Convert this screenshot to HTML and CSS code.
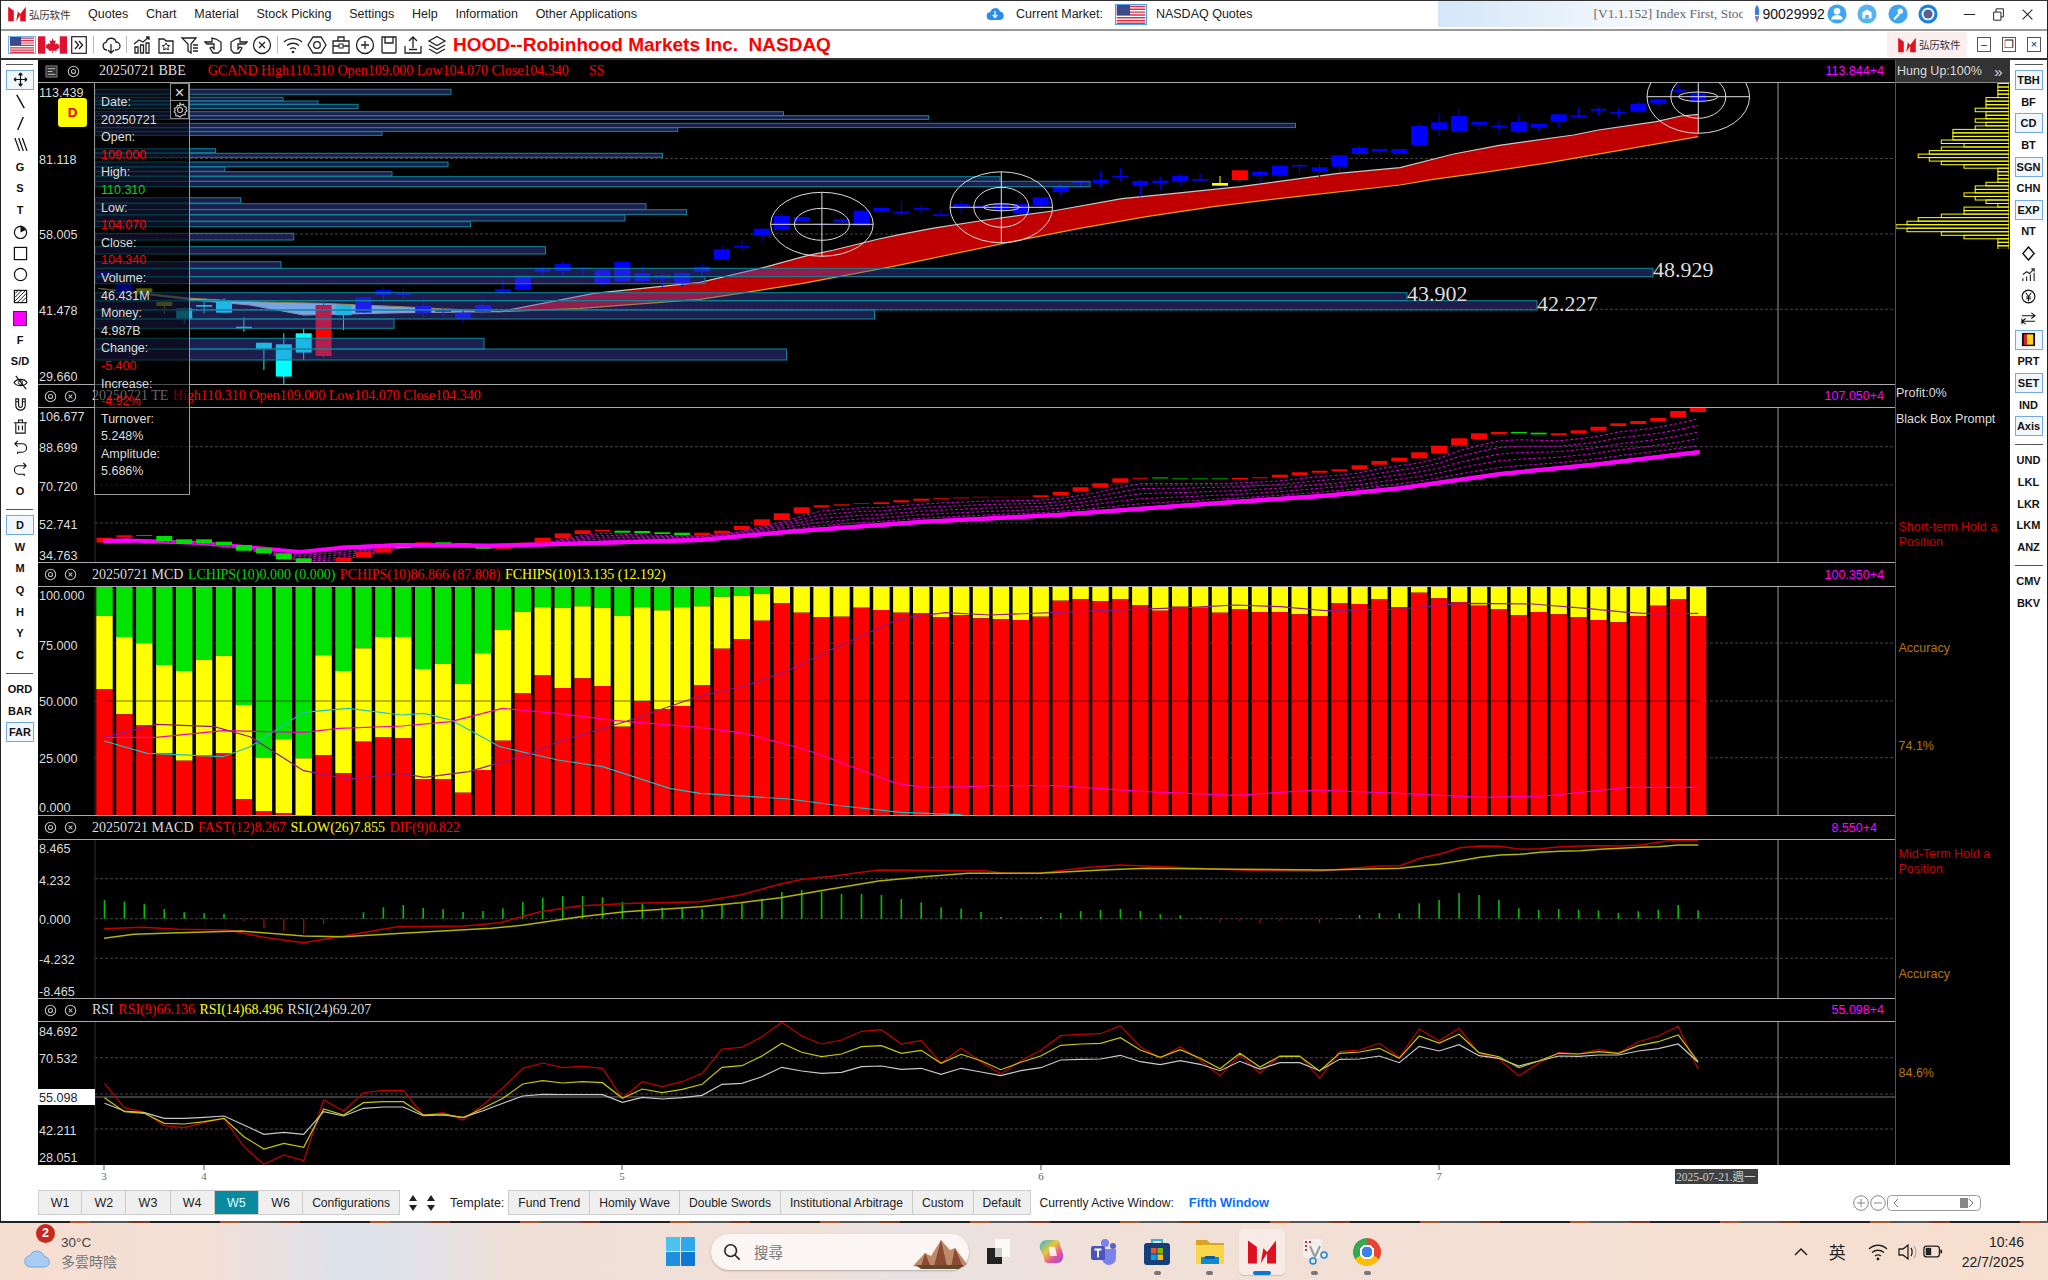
FILE: index.html
```html
<!DOCTYPE html>
<html lang="en">
<head>
<meta charset="utf-8">
<title>HOOD chart</title>
<link rel="stylesheet" href="styles.css">
</head>
<body>
<svg class="defs" width="0" height="0">
  <symbol id="us" viewBox="0 0 30 20"><rect width="30" height="20" fill="#fff"/><path d="M0 1.5h30M0 4.5h30M0 7.5h30M0 10.5h30M0 13.5h30M0 16.5h30M0 19.2h30" stroke="#d8324a" stroke-width="1.5"/><rect width="14" height="10.5" fill="#3c4a8c"/></symbol>
  <symbol id="ca" viewBox="0 0 30 18"><rect width="30" height="18" fill="#fff"/><rect width="7.5" height="18" fill="#e01030"/><rect x="22.5" width="7.5" height="18" fill="#e01030"/><path d="M15 3l1.6 3 1.8-.8-.7 4 2.2-.9.7 1.5 2-.3-.9 2.4.9.7-3.6 2.4.4 1.3-3.7-.5V18h-1v-2.2l-3.7.5.4-1.3-3.6-2.4.9-.7-.9-2.4 2 .3.7-1.5 2.2.9-.7-4 1.8.8z" fill="#e01030" transform="translate(0 -1)"/></symbol>
  <symbol id="mark" viewBox="0 0 22 20"><path d="M0 1l7 5v13H0z" fill="#e01020"/><path d="M22 1v18h-7v-8l-5 8 2-12 3 3z" fill="#e01020"/></symbol>
  <symbol id="gear" viewBox="0 0 14 14"><circle cx="7" cy="7" r="5.6" fill="none" stroke="#bbb" stroke-width="1.2"/><circle cx="7" cy="7" r="2.2" fill="none" stroke="#bbb" stroke-width="1.2"/></symbol>
  <symbol id="xc" viewBox="0 0 14 14"><circle cx="7" cy="7" r="5.6" fill="none" stroke="#bbb" stroke-width="1.2"/><path d="M5 5l4 4M9 5l-4 4" stroke="#bbb" stroke-width="1.1"/></symbol>
</svg>

<div class="window">
  <header class="menubar">
    <div class="logo"><svg class="logo-mark"><use href="#mark"/></svg><span class="logo-text">弘历软件</span></div>
    <nav class="menu"><span>Quotes</span><span>Chart</span><span>Material</span><span>Stock Picking</span><span>Settings</span><span>Help</span><span>Information</span><span>Other Applications</span></nav>
    <div class="market">
      <svg class="cloud-blue" viewBox="0 0 18 14"><path d="M5 13a4 4 0 0 1-.6-8A5 5 0 0 1 14 4.500a4.300 4.300 0 0 1 0 8.500z" fill="#2a8cf0"/><path d="M9 4v6M6.800 8l2.200 2.500L11.200 8" stroke="#fff" stroke-width="1.300" fill="none"/></svg>
      <span class="market-label">Current Market:</span>
      <svg class="market-flag"><use href="#us"/></svg>
      <span>NASDAQ Quotes</span>
    </div>
    <div class="version"><span>[V1.1.152] Index First, Stoc</span></div>
    <div class="user">
      <svg class="rocket" viewBox="0 0 8 20"><path d="M4 1c2 2 2.500 5 2 10H2C1.500 6 2 3 4 1z" fill="#3a7fd0"/><path d="M2 12h4v3H2z" fill="#88b"/><path d="M3 15h2l-1 4z" fill="#e02020"/></svg>
      <span>90029992</span>
      <svg class="round" viewBox="0 0 22 22"><circle cx="11" cy="11" r="10.500" fill="#3fa4f2"/><circle cx="11" cy="8" r="3.600" fill="#fff"/><path d="M4.500 17c1-4 3.500-5 6.500-5s5.500 1 6.500 5z" fill="#fff"/></svg>
      <svg class="round gap" viewBox="0 0 22 22"><circle cx="11" cy="11" r="10.500" fill="#56b4f4"/><path d="M6 16V9l5-3 5 3v7z" fill="#fff"/><path d="M9 16v-4h4v4z" fill="#56b4f4"/></svg>
      <svg class="round gap" viewBox="0 0 22 22"><circle cx="11" cy="11" r="10.500" fill="#3fa4f2"/><circle cx="13.500" cy="8" r="3" fill="#fff"/><path d="M11.500 10L6 16l1.500 1.500L13 12z" fill="#fff"/></svg>
      <svg class="round gap" viewBox="0 0 22 22"><circle cx="11" cy="11" r="10.500" fill="#1f7fe0"/><circle cx="11" cy="11" r="7" fill="#fff"/><circle cx="11" cy="11" r="5" fill="#2a6fc0"/><path d="M9 8v6M13 8v6" stroke="#e03030" stroke-width="1.500"/></svg>
    </div>
    <div class="winctl">
      <svg viewBox="0 0 16 16"><path d="M1 8h14" stroke="#222" stroke-width="1.300"/></svg>
      <svg viewBox="0 0 16 16"><path d="M2 5h9v10H2zM5 5V1h9v10h-3" fill="none" stroke="#222" stroke-width="1.200"/></svg>
      <svg viewBox="0 0 16 16"><path d="M2 2l12 12M14 2L2 14" stroke="#222" stroke-width="1.300"/></svg>
    </div>
  </header>

  <div class="toolbar">
    <svg class="tb-us"><use href="#us"/></svg>
    <svg class="tb-ca"><use href="#ca"/></svg>
    <svg class="tb-more" viewBox="0 0 16 18"><rect x=".7" y=".7" width="14.600" height="16.600" fill="#fff" stroke="#222" stroke-width="1.200"/><path d="M4 5l3.500 4L4 13M8 5l3.500 4L8 13" fill="none" stroke="#222" stroke-width="1.400"/></svg>
    <i class="tb-sep"></i>
    <svg class="ti" viewBox="0 0 20 20"><path d="M6 15a4 4 0 0 1-.7-7.900A5 5 0 0 1 15 7a4 4 0 0 1 0 8h-1" fill="none" stroke="#222" stroke-width="1.300"/><path d="M10 9v9M7 15l3 3 3-3" fill="none" stroke="#222" stroke-width="1.300"/></svg>
    <i class="tb-sep"></i>
    <svg class="ti" viewBox="0 0 20 20"><path d="M3 18v-6h3v6zM8.500 18v-8h3v8zM14 18V8h3v10zM2 9l5-4 4 2 6-5M14 2h3v3" fill="none" stroke="#222" stroke-width="1.300"/></svg>
    <svg class="ti" viewBox="0 0 20 20"><path d="M3 4h5l2 2h7v12H3zM3 4v14" fill="none" stroke="#222" stroke-width="1.300"/><path d="M10 8l1.200 2.300 2.500.4-1.800 1.700.5 2.500-2.400-1.200-2.400 1.200.5-2.500-1.800-1.700 2.500-.4z" fill="none" stroke="#222"/></svg>
    <svg class="ti" viewBox="0 0 20 20"><path d="M2 3h14l-5 6v9l-3-2V9zM13 10h5M13 13h5M13 16h5" fill="none" stroke="#222" stroke-width="1.300"/></svg>
    <svg class="ti" viewBox="0 0 20 20"><path d="M1 7h7V3l4 1 5 3v8l-3 3H9l-3-5 2-1 2 2V9H3z" fill="none" stroke="#222" stroke-width="1.300"/></svg>
    <svg class="ti" viewBox="0 0 20 20"><path d="M19 7h-7V3l-4 1-5 3v8l3 3h5l3-5-2-1-2 2V9h7z" fill="none" stroke="#222" stroke-width="1.300"/></svg>
    <svg class="ti" viewBox="0 0 20 20"><circle cx="10" cy="10" r="8.500" fill="none" stroke="#222" stroke-width="1.300"/><path d="M7 7l6 6M13 7l-6 6" stroke="#222" stroke-width="1.300"/></svg>
    <i class="tb-sep"></i>
    <svg class="ti" viewBox="0 0 20 20"><path d="M1 7c5-4.500 13-4.500 18 0M4 10.500c3.500-3 8.500-3 12 0M7 14c2-1.500 4-1.500 6 0" fill="none" stroke="#222" stroke-width="1.300"/><circle cx="10" cy="17" r="1.300" fill="#222"/></svg>
    <svg class="ti" viewBox="0 0 20 20"><path d="M6 2h8l5 8-5 8H6l-5-8z" fill="none" stroke="#222" stroke-width="1.300"/><circle cx="10" cy="10" r="3.300" fill="none" stroke="#222" stroke-width="1.300"/></svg>
    <svg class="ti" viewBox="0 0 20 20"><path d="M2 6h16v12H2zM7 6V2h6v4M2 11h16" fill="none" stroke="#222" stroke-width="1.300"/><rect x="8" y="9" width="4" height="4" fill="#fff" stroke="#222"/></svg>
    <svg class="ti" viewBox="0 0 20 20"><circle cx="10" cy="10" r="8.500" fill="none" stroke="#222" stroke-width="1.300"/><path d="M10 6v8M6 10h8" stroke="#222" stroke-width="1.300"/></svg>
    <svg class="ti" viewBox="0 0 20 20"><path d="M3 2h14v15a1 1 0 0 1-1 1H4a1 1 0 0 1-1-1zM6 2v6h8V2" fill="none" stroke="#222" stroke-width="1.300"/></svg>
    <svg class="ti" viewBox="0 0 20 20"><path d="M10 13V2M6 6l4-4 4 4M2 11v7h16v-7M6 14.500h8" fill="none" stroke="#222" stroke-width="1.300"/></svg>
    <svg class="ti" viewBox="0 0 20 20"><path d="M10 1.500l8 4.500-8 4.500L2 6zM2 10l8 4.500 8-4.500M2 14l8 4.500 8-4.500" fill="none" stroke="#222" stroke-width="1.300"/></svg>
    <span class="title">HOOD--Robinhood Markets Inc.&nbsp; NASDAQ</span>
    <div class="brand"><svg class="logo-mark"><use href="#mark"/></svg><span class="logo-text">弘历软件</span></div>
    <span class="mini">&#8211;</span><span class="mini">&#10064;</span><span class="mini">&#215;</span>
  </div>

  <div class="workspace">
    <aside class="leftbar">
      <i class="sep first"></i>
      <div class="tool on"><svg viewBox="0 0 16 16"><path d="M8 1v14M1 8h14M8 1L6 3.500M8 1l2 2.500M8 15l-2-2.500M8 15l2-2.500M1 8l2.500-2M1 8l2.500 2M15 8l-2.500-2M15 8l-2.500 2" fill="none" stroke="#111" stroke-width="1.300"/></svg></div>
      <div class="tool"><svg viewBox="0 0 16 16"><path d="M4 1l8 14" stroke="#111" stroke-width="1.500"/></svg></div>
      <div class="tool"><svg viewBox="0 0 16 16"><path d="M11 1L5 15" stroke="#111" stroke-width="1.500"/></svg></div>
      <div class="tool"><svg viewBox="0 0 16 16"><path d="M2 1l5 14M6 1l5 14M10 1l5 14" stroke="#111" stroke-width="1.300"/></svg></div>
      <div class="tool">G</div><div class="tool">S</div><div class="tool">T</div>
      <div class="tool"><svg viewBox="0 0 16 16"><circle cx="8" cy="9" r="6.500" fill="none" stroke="#111" stroke-width="1.300"/><path d="M8 9V1l6 5z" fill="#111"/></svg></div>
      <div class="tool"><svg viewBox="0 0 16 16"><rect x="1.500" y="1.500" width="13" height="13" fill="none" stroke="#111" stroke-width="1.300"/></svg></div>
      <div class="tool"><svg viewBox="0 0 16 16"><circle cx="8" cy="8" r="6.500" fill="none" stroke="#111" stroke-width="1.300"/></svg></div>
      <div class="tool"><svg viewBox="0 0 16 16"><rect x="1.500" y="1.500" width="13" height="13" fill="none" stroke="#111" stroke-width="1.300"/><path d="M2 5l3-3M2 9l7-7M2 13L13 2M5 14l9-9M9 14l5-5" stroke="#111"/></svg></div>
      <div class="tool"><span class="swatch"></span></div>
      <div class="tool">F</div><div class="tool">S/D</div>
      <div class="tool"><svg viewBox="0 0 16 16"><path d="M1 8c3-4.500 11-4.500 14 0-3 4.500-11 4.500-14 0z" fill="none" stroke="#111" stroke-width="1.200"/><circle cx="8" cy="8" r="2.200" fill="none" stroke="#111"/><path d="M3 1l11 14" stroke="#111" stroke-width="1.200"/></svg></div>
      <div class="tool"><svg viewBox="0 0 16 16"><path d="M3 2v7a5 5 0 0 0 10 0V2h-3v7a2 2 0 0 1-4 0V2zM3 5h3M10 5h3" fill="none" stroke="#111" stroke-width="1.200"/></svg></div>
      <div class="tool"><svg viewBox="0 0 16 16"><path d="M3 4h10v11H3zM1 4h14M6 4V1h4v3M6 7v5M10 7v5" fill="none" stroke="#111" stroke-width="1.200"/></svg></div>
      <div class="tool"><svg viewBox="0 0 16 16"><path d="M5 1L2 4l3 3M2 4h8a4.500 4.500 0 0 1 0 9H5v2" fill="none" stroke="#111" stroke-width="1.200"/></svg></div>
      <div class="tool"><svg viewBox="0 0 16 16"><path d="M11 1l3 3-3 3M14 4H6a4.500 4.500 0 0 0 0 9h6v2" fill="none" stroke="#111" stroke-width="1.200"/></svg></div>
      <div class="tool">O</div>
      <i class="sep"></i>
      <div class="tool on">D</div><div class="tool">W</div><div class="tool">M</div><div class="tool">Q</div><div class="tool">H</div><div class="tool">Y</div><div class="tool">C</div>
      <i class="sep"></i>
      <div class="tool">ORD</div><div class="tool">BAR</div><div class="tool on">FAR</div>
    </aside>

    <div class="content">
      <div class="upper">
        <div class="charts">
          <div class="phead head-main">
            <svg class="hicon first" viewBox="0 0 14 14"><path d="M1 1h12v12H1z" fill="#333" stroke="#888"/><path d="M3 4h8M3 7h5M3 10h8" stroke="#ccc"/></svg>
            <svg class="hicon second"><use href="#gear"/></svg>
            <span class="h-date">20250721 BBE</span>
            <span class="c-red gap-l">GCAND High110.310 Open109.000 Low104.070 Close104.340</span>
            <span class="c-red gap-s">SS</span>
            <span class="pval">113.844+4</span>
          </div>
          <svg class="plot p1" id="p1"></svg>
          <div class="phead">
            <svg class="hicon"><use href="#gear"/></svg><svg class="hicon"><use href="#xc"/></svg>
            <span class="h-date">20250721 TE</span> <span class="c-red">High110.310 Open109.000 Low104.070 Close104.340</span>
            <span class="pval">107.050+4</span>
          </div>
          <svg class="plot p2" id="p2"></svg>
          <div class="phead h24">
            <svg class="hicon"><use href="#gear"/></svg><svg class="hicon"><use href="#xc"/></svg>
            <span class="h-date">20250721 MCD</span> <span class="c-green">LCHIPS(10)0.000 (0.000)</span> <span class="c-red">PCHIPS(10)86.866 (87.808)</span> <span class="c-yellow">FCHIPS(10)13.135 (12.192)</span>
            <span class="pval">100.350+4</span>
          </div>
          <svg class="plot p3" id="p3"></svg>
          <div class="phead h24">
            <svg class="hicon"><use href="#gear"/></svg><svg class="hicon"><use href="#xc"/></svg>
            <span class="h-date">20250721 MACD</span> <span class="c-red">FAST(12)8.267</span> <span class="c-yellow">SLOW(26)7.855</span> <span class="c-red">DIF(9)0.822</span>
            <span class="pval small">8.550+4</span>
          </div>
          <svg class="plot p4" id="p4"></svg>
          <div class="phead">
            <svg class="hicon"><use href="#gear"/></svg><svg class="hicon"><use href="#xc"/></svg>
            <span class="h-date">RSI</span> <span class="c-red">RSI(9)66.136</span> <span class="c-yellow">RSI(14)68.496</span> <span class="h-date">RSI(24)69.207</span>
            <span class="pval">55.098+4</span>
          </div>
          <svg class="plot p5" id="p5"></svg>

          <div class="period">D</div>
          <div class="tip">
            <div class="tip-close">&#215;</div>
            <div class="tip-gear"><svg viewBox="0 0 16 16"><circle cx="8" cy="8" r="2.500" fill="none" stroke="#ccc" stroke-width="1.100"/><path d="M8 1l1.300 2 2.300-.7.600 2.300 2.300.7-.7 2.300 1.200 1.400-1.900 1.400.2 2.400-2.400.1L8 15l-1.900-1.100-2.400-.1.200-2.400L2 10l1.200-1.400-.7-2.300 2.300-.7.600-2.300 2.300.7z" fill="none" stroke="#ccc" stroke-width="1.100"/></svg></div>
            <p>Date:</p><p>20250721</p>
            <p>Open:</p><p class="c-red">109.000</p>
            <p>High:</p><p class="c-green">110.310</p>
            <p>Low:</p><p class="c-red">104.070</p>
            <p>Close:</p><p class="c-red">104.340</p>
            <p>Volume:</p><p>46.431M</p>
            <p>Money:</p><p>4.987B</p>
            <p>Change:</p><p class="c-red">-5.400</p>
            <p>Increase:</p><p class="c-red">-4.92%</p>
            <p>Turnover:</p><p>5.248%</p>
            <p>Amplitude:</p><p>5.686%</p>
          </div>
        </div>

        <aside class="hung">
          <div class="hung-head"><span>Hung Up:100%</span><span class="chev">&#187;</span></div>
          <svg class="hist" id="hist"></svg>
          <p class="note m1">Profit:0%</p>
          <p class="note m2">Black Box Prompt</p>
          <p class="note red m3">Short-term Hold a Position</p>
          <p class="note amber m4">Accuracy</p>
          <p class="note amber m5">74.1%</p>
          <p class="note red m6">Mid-Term Hold a Position</p>
          <p class="note amber m7">Accuracy</p>
          <p class="note amber m8">84.6%</p>
        </aside>

        <aside class="rightbar">
          <i class="sep first"></i>
          <div class="tool on">TBH</div><div class="tool">BF</div><div class="tool on">CD</div><div class="tool">BT</div><div class="tool on">SGN</div><div class="tool">CHN</div><div class="tool on">EXP</div><div class="tool">NT</div>
          <div class="tool"><svg viewBox="0 0 16 16"><path d="M8 1l6 7-6 7-6-7z" fill="none" stroke="#111" stroke-width="1.500"/></svg></div>
          <div class="tool"><svg viewBox="0 0 16 16"><path d="M2 15v-3M6 15v-5M10 15V8M14 15V6M2 8l4-3 3 2 5-5M11 2h3v3" fill="none" stroke="#222" stroke-width="1.200"/></svg></div>
          <div class="tool"><svg viewBox="0 0 16 16"><circle cx="8" cy="8" r="6.800" fill="none" stroke="#111" stroke-width="1.200"/><path d="M5 4l3 4 3-4M8 8v5M5.500 8.500h5M5.500 10.500h5" fill="none" stroke="#111" stroke-width="1.100"/></svg></div>
          <div class="tool"><svg viewBox="0 0 16 16"><path d="M1 5h14M11 2l4 3-4 3M15 11H1M5 8l-4 3 4 3M1 8v6" fill="none" stroke="#111" stroke-width="1.100"/></svg></div>
          <div class="tool on"><svg viewBox="0 0 16 16"><rect x="1" y="1" width="14" height="14" fill="#111"/><rect x="6" y="2.500" width="7" height="11" fill="#ffd21e"/><path d="M3 2.500h4l-1.500 3 1.500 2.500-1.500 2.500 1.500 3H3z" fill="#e02020"/></svg></div>
          <div class="tool">PRT</div><div class="tool on">SET</div><div class="tool">IND</div><div class="tool on">Axis</div>
          <i class="sep"></i>
          <div class="tool">UND</div><div class="tool">LKL</div><div class="tool">LKR</div><div class="tool">LKM</div><div class="tool">ANZ</div>
          <i class="sep"></i>
          <div class="tool">CMV</div><div class="tool">BKV</div>
        </aside>
      </div>

      <svg class="timeaxis" id="timeaxis"></svg>

      <div class="tabs">
        <span class="tab w">W1</span><span class="tab w">W2</span><span class="tab w">W3</span><span class="tab w">W4</span><span class="tab w active">W5</span><span class="tab w">W6</span><span class="tab">Configurations</span>
        <svg class="sort s1" viewBox="0 0 10 18"><path d="M5 1l4 6H1zM5 17l4-6H1z" fill="#222"/></svg>
        <svg class="sort s2" viewBox="0 0 10 18"><path d="M5 1l4 6H1zM5 17l4-6H1z" fill="#222"/></svg>
        <span class="tpl">Template:</span>
        <span class="tab first-t">Fund Trend</span><span class="tab">Homily Wave</span><span class="tab">Double Swords</span><span class="tab">Institutional Arbitrage</span><span class="tab">Custom</span><span class="tab">Default</span>
        <span class="active-label">Currently Active Window:</span>
        <span class="active-name">Fifth Window</span>
        <div class="zoomer">
          <svg class="zb" viewBox="0 0 16 16"><circle cx="8" cy="8" r="7.300" fill="none" stroke="#888"/><path d="M8 4v8M4 8h8" stroke="#888"/></svg>
          <svg class="zb" viewBox="0 0 16 16"><circle cx="8" cy="8" r="7.300" fill="none" stroke="#888"/><path d="M4 8h8" stroke="#888"/></svg>
          <svg class="scroll" viewBox="0 0 94 16"><rect x=".5" y=".5" width="93" height="15" rx="4" fill="#fff" stroke="#999"/><path d="M11 4l-4 4 4 4M82 4l4 4-4 4" fill="none" stroke="#777"/><rect x="73" y="3" width="8" height="10" fill="#888"/></svg>
        </div>
      </div>
    </div>
  </div>
</div>
<div class="seam"></div>

<footer class="taskbar">
  <div class="weather">
    <svg class="w-cloud" viewBox="0 0 30 20"><path d="M8 19a6 6 0 0 1-1-12A8 8 0 0 1 22 8a5.500 5.500 0 0 1 0 11z" fill="#a9cdf2" stroke="#6aa6e0"/></svg>
    <span class="badge">2</span>
    <div class="w-text"><span>30°C</span><span class="w-sub">多雲時陰</span></div>
  </div>
  <svg class="start" viewBox="0 0 28 28"><rect width="13.500" height="13.500" fill="#4cc2f1"/><rect x="14.500" width="13.500" height="13.500" fill="#2fa8ec"/><rect y="14.500" width="13.500" height="13.500" fill="#1c8fe0"/><rect x="14.500" y="14.500" width="13.500" height="13.500" fill="#0f78d4"/></svg>
  <div class="search">
    <svg class="s-icon" viewBox="0 0 20 20"><circle cx="8.500" cy="8.500" r="6.500" fill="none" stroke="#222" stroke-width="1.800"/><path d="M13 13l5.500 5.500" stroke="#222" stroke-width="1.800"/></svg>
    <span>搜尋</span>
    <svg class="s-art" viewBox="0 0 58 36"><path d="M2 32l12-13 6 3L30 6l9 10 5-2 12 16-4 3H8z" fill="#c08a6a"/><path d="M30 6l-7 26h13zM14 19l-4 14h10zM44 14l-4 19h12z" fill="#8a4a34"/><path d="M5 31h48l-5 4H10z" fill="#5e4a2a"/></svg>
  </div>
  <div class="apps">
    <div class="app"><svg viewBox="0 0 28 28"><rect x="10" y="1" width="15" height="18" fill="#fff" opacity=".8"/><rect x="2" y="10" width="15" height="16" fill="#222"/><rect x="10" y="10" width="7" height="9" fill="#ccc"/></svg></div>
    <div class="app"><svg viewBox="0 0 28 28"><defs><linearGradient id="cop" x1="0" y1="0" x2="1" y2="1"><stop offset="0" stop-color="#2bb3e6"/><stop offset=".4" stop-color="#e8c83a"/><stop offset=".7" stop-color="#e94fa0"/><stop offset="1" stop-color="#7a5ae0"/></linearGradient></defs><path d="M9 2h9c3 0 4 3 4 5l3 9c1 4-1 9-6 9h-9c-3 0-4-2-4-5L2 11C1 6 4 2 9 2z" fill="url(#cop)"/><path d="M11 9h6l2 9h-7z" fill="#fff" opacity=".85"/></svg></div>
    <div class="app"><svg viewBox="0 0 28 28"><circle cx="15" cy="5" r="4" fill="#7b83eb"/><circle cx="23" cy="8" r="3" fill="#5b5fc7"/><path d="M11 11h15v9a7 7 0 0 1-14 0z" fill="#7b83eb"/><rect x="1" y="8" width="14" height="14" rx="2" fill="#4b53bc"/><path d="M4.500 11.500h7M8 11.500v8" stroke="#fff" stroke-width="1.800"/></svg></div>
    <div class="app"><svg viewBox="0 0 28 28"><path d="M9 6V2h10v4" fill="none" stroke="#2bb8d8" stroke-width="2"/><rect x="1" y="5" width="26" height="22" rx="3" fill="#153f7c"/><rect x="8" y="10" width="5.500" height="5.500" fill="#f25022"/><rect x="14.500" y="10" width="5.500" height="5.500" fill="#7fba00"/><rect x="8" y="16.500" width="5.500" height="5.500" fill="#00a4ef"/><rect x="14.500" y="16.500" width="5.500" height="5.500" fill="#ffb900"/></svg><i class="dot"></i></div>
    <div class="app"><svg viewBox="0 0 28 28"><path d="M0 2h11l3 3h14v4H0z" fill="#d9a520"/><path d="M0 7h28v19H0z" fill="#fbd54a"/><path d="M5 19h18v7H5z" fill="#0f8bd0"/><rect x="9" y="18" width="10" height="3" fill="#0a5ea8"/></svg><i class="dot"></i></div>
    <div class="app current"><svg viewBox="0 0 28 28"><use href="#mark"/></svg><i class="bar"></i></div>
    <div class="app"><svg viewBox="0 0 28 28"><rect x="2" y="1" width="19" height="19" rx="2" fill="#f0f0f0"/><path d="M4 3h2v2H4zM8 3h2v2H8zM4 7h2v2H4zM4 11h2v2H4z" fill="#d03030"/><path d="M9 8l5 11M19 8l-5 11" stroke="#999" stroke-width="2"/><circle cx="12" cy="23" r="3" fill="none" stroke="#1e88d0" stroke-width="1.500"/><circle cx="23" cy="17" r="3" fill="none" stroke="#1e88d0" stroke-width="1.500"/></svg><i class="dot"></i></div>
    <div class="app"><span class="chrome"></span><i class="dot"></i></div>
  </div>
  <div class="tray">
    <svg class="t-caret" viewBox="0 0 14 10"><path d="M1 8l6-6 6 6" fill="none" stroke="#222" stroke-width="1.500"/></svg>
    <span class="t-ime">英</span>
    <svg class="t-wifi" viewBox="0 0 20 18"><path d="M1 6c5-5 13-5 18 0M4 9.500c3.500-3 8.500-3 12 0M7 13c2-1.500 4-1.500 6 0" fill="none" stroke="#222" stroke-width="1.400"/><circle cx="10" cy="16" r="1.400" fill="#222"/></svg>
    <svg class="t-vol" viewBox="0 0 20 18"><path d="M2 6h4l5-4v14l-5-4H2zM14 5c1.500 2 1.500 6 0 8" fill="none" stroke="#222" stroke-width="1.300"/><path d="M17 3c2.500 3 2.500 9 0 12" fill="none" stroke="#aaa" stroke-width="1.200"/></svg>
    <svg class="t-bat" viewBox="0 0 22 14"><rect x="1" y="1" width="17" height="12" rx="3" fill="none" stroke="#222" stroke-width="1.400"/><rect x="3" y="3" width="6" height="8" fill="#222"/><rect x="19" y="5" width="2" height="4" fill="#222"/></svg>
    <div class="t-time"><span>10:46</span><span>22/7/2025</span></div>
  </div>
</footer>
<script src="charts.js"></script>
</body>
</html>
```
FILE: styles.css
```css
* { box-sizing: border-box; }
html, body { margin: 0; padding: 0; }
body { width: 2048px; height: 1280px; overflow: hidden; background: #fff; font-family: "Liberation Sans", Arial, sans-serif; font-size: 12.5px; color: #222; }
.defs { position: absolute; }
p { margin: 0; }
.window { height: 1221px; display: flex; flex-direction: column; border-left: 1px solid #222; border-right: 1px solid #222; border-top: 1px solid #333; background: #fff; }

/* menu bar */
.menubar { height: 30px; flex: none; display: flex; align-items: center; border-bottom: 2px solid #999; padding-bottom: 2px; }
.logo { display: flex; align-items: center; width: 60px; margin-left: 7px; flex: none; }
.logo-mark { width: 18px; height: 16px; flex: none; }
.logo-text { font-family: "Noto Sans CJK SC", sans-serif; font-size: 10.5px; color: #333; margin-left: 3px; white-space: nowrap; letter-spacing: -.2px; }
.menu { display: flex; gap: 17.7px; margin-left: 20px; white-space: nowrap; }
.market { display: flex; align-items: center; margin-left: 349px; flex: none; white-space: nowrap; }
.cloud-blue { width: 18px; height: 14px; }
.market-label { margin-left: 12px; }
.market-flag { width: 32px; height: 21px; margin: 0 9px 0 12px; border: 1.5px solid #4aa0ea; }
.version { width: 305px; height: 26px; margin-left: 185px; flex: none; overflow: hidden; display: flex; align-items: center; white-space: nowrap; padding-left: 156px; background: linear-gradient(90deg, #d4e6f8, #f2f7fc 60%, #fff); font-family: "Liberation Serif", serif; font-size: 13.4px; color: #666; }
.user { display: flex; align-items: center; margin-left: 10px; font-size: 14px; color: #111; white-space: nowrap; flex: none; }
.rocket { width: 8px; height: 20px; margin-right: 2px; }
.round { width: 20px; height: 20px; margin-left: 2px; }
.round.gap { margin-left: 10.5px; }
.winctl { display: flex; gap: 16px; margin-left: auto; padding-right: 13px; flex: none; }
.winctl svg { width: 13px; height: 13px; flex: none; }

/* toolbar */
.toolbar { height: 29px; flex: none; display: flex; align-items: center; border-bottom: 2px solid #333; padding-left: 7px; position: relative; }
.tb-us { width: 28px; height: 18px; border: 1.5px solid #6fb0ee; flex: none; }
.tb-ca { width: 29px; height: 18px; margin-left: 2px; flex: none; }
.tb-more { width: 16px; height: 18px; margin-left: 4px; flex: none; }
.tb-sep { width: 1px; height: 17px; background: #bbb; margin: 0 3px; flex: none; }
.tb-more + .tb-sep { margin-left: 6px; margin-right: 5px; }
.ti { width: 20px; height: 20px; margin: 0 2px; flex: none; }
.title { margin-left: 4px; font-size: 19px; font-weight: 700; color: #f00; white-space: nowrap; flex: none; }
.brand { margin-left: auto; width: 80px; height: 25px; background: #fbeeee; display: flex; align-items: center; padding-left: 11px; flex: none; }
.mini { width: 14px; height: 15px; margin-left: 11px; border: 1px solid #555; display: flex; align-items: center; justify-content: center; font-size: 11px; line-height: 1; flex: none; }
.brand + .mini { margin-left: 10px; }
.mini:last-child { margin-right: 6px; }

/* workspace */
.workspace { flex: 1; display: flex; min-height: 0; }
.leftbar { width: 37px; flex: none; }
.rightbar { width: 38px; flex: none; }
.leftbar, .rightbar { display: flex; flex-direction: column; }
.sep { display: block; height: 12.4px; flex: none; padding-top: 7px; }
.sep::after { content: ""; display: block; height: 1px; background: #555; margin: 0 5px; }
.sep.first { height: 9.2px; padding-top: 4px; }
.tool { height: 21.65px; flex: none; margin: 0 4px 0 5px; display: flex; align-items: center; justify-content: center; font-size: 11px; font-weight: 700; color: #111; white-space: nowrap; }
.rightbar .tool { margin: 0 5px; }
.tool.on { border: 1.5px solid #74a9e6; background: #f2f7fd; height: 20px; margin-top: .8px; margin-bottom: .85px; }
.tool svg { width: 15px; height: 15px; }
.swatch { width: 14px; height: 15px; background: #ff00ff; border: 1px solid #333; display: block; }

.content { flex: 1; min-width: 0; display: flex; flex-direction: column; }
.upper { display: flex; height: 1105px; flex: none; }
.charts { width: 1857px; flex: none; display: flex; flex-direction: column; position: relative; background: #000; }
.phead { height: 23px; flex: none; display: flex; align-items: center; border-bottom: 1px solid #aaa; padding-left: 3px; font-family: "Liberation Serif", serif; font-size: 14px; white-space: pre; }
.phead.h24 { height: 24px; }
.phead > span + span { margin-left: 4.5px; }
.hicon { width: 13px; height: 13px; margin-left: 3px; margin-right: 4px; flex: none; }
.head-main .first { margin-left: 4px; margin-right: 3px; }
.head-main .second { margin-left: 6px; }
.h-date { color: #ddd; }
.hicon + .h-date { margin-left: 11px; }
.head-main .hicon + .h-date { margin-left: 15px; }
.c-red { color: #f00; }
.c-green { color: #00d800; }
.c-yellow { color: #ff0; }
.phead > .gap-l { margin-left: 22px; }
.phead > .gap-s { margin-left: 20px; }
.phead > .pval { margin-left: auto; margin-right: 11px; color: #f0f; font-family: "Liberation Sans", sans-serif; font-size: 12.5px; }
.phead > .pval.small { margin-right: 18px; }
.plot { display: block; width: 1857px; flex: none; border-bottom: 1px solid #aaa; }
.plot.p1 { height: 302px; }
.plot.p2 { height: 155px; }
.plot.p3 { height: 229px; }
.plot.p4 { height: 159px; }
.plot.p5 { height: 143px; border-bottom: 0; }
.ax { font-family: "Liberation Sans", sans-serif; font-size: 12.6px; fill: #ddd; }
.ax-dark { fill: #222; }
.big { font-family: "Liberation Serif", serif; font-size: 22px; fill: #ddd; }

.period { position: absolute; left: 20px; top: 38px; width: 29px; height: 29px; background: #ff0; border-radius: 3px; color: #e00; font-weight: 700; font-size: 13.5px; display: flex; align-items: center; justify-content: center; }
.tip { position: absolute; left: 56px; top: 22px; width: 96px; height: 413px; border: 1px solid #999; background: rgba(0, 0, 0, .55); padding-top: 11px; padding-left: 6px; color: #ddd; font-size: 12.5px; }
.tip p { height: 17.6px; line-height: 17.6px; white-space: nowrap; }
.tip-close, .tip-gear { position: absolute; right: 0; width: 19px; border: 1px solid #888; background: #000; display: flex; align-items: center; justify-content: center; color: #ddd; }
.tip-close { top: 0; height: 18px; font-size: 17px; line-height: 1; }
.tip-gear { top: 17px; height: 19px; }
.tip-gear svg { width: 16px; height: 16px; }

/* side panel */
.hung { width: 114.5px; flex: none; background: #000; border-left: 1px solid #555; color: #ddd; font-size: 12.5px; }
.hung-head { height: 23px; background: #333; border-bottom: 1px solid #888; display: flex; align-items: center; justify-content: space-between; padding: 0 7px 0 1px; white-space: nowrap; }
.chev { font-size: 15px; line-height: 1; }
.hist { display: block; width: 113px; height: 166px; }
.note { line-height: 15px; padding-left: 0; }
.note.red { color: #c80000; padding-left: 2.5px; }
.note.amber { color: #b87800; padding-left: 2.5px; }
.m1 { margin-top: 136.5px; }
.m2 { margin-top: 11px; }
.m3 { margin-top: 93px; }
.m4 { margin-top: 91px; }
.m5 { margin-top: 83px; }
.m6 { margin-top: 93px; }
.m7 { margin-top: 90px; }
.m8 { margin-top: 84px; }

/* time axis and tabs */
.timeaxis { display: block; width: 2010px; height: 25px; flex: none; }
.tick { font-family: "Liberation Serif", serif; font-size: 11px; fill: #666; }
.chip { font-family: "Liberation Serif", "Noto Sans CJK TC", serif; font-size: 11.5px; fill: #ccc; }
.tabs { height: 25px; flex: none; display: flex; align-items: stretch; white-space: nowrap; padding-right: 66px; font-size: 12.1px; }
.tab { display: flex; align-items: center; justify-content: center; padding: 0 9px; background: #efefef; border: 1px solid #ccc; border-left: 0; }
.tab.w { width: 44.200px; padding: 0; font-size: 12.5px; }
.tab.w:first-child, .tab.first-t { border-left: 1px solid #ccc; }
.tab.active { background: #0a8a9e; color: #dff; }
.sort { width: 10px; height: 18px; align-self: center; }
.s1 { margin-left: 8px; }
.s2 { margin-left: 8px; }
.tpl { align-self: center; margin: 0 4px 0 14px; font-size: 12.5px; }
.active-label { align-self: center; margin-left: 8.5px; }
.active-name { align-self: center; margin-left: 15px; font-weight: 700; font-size: 12.8px; color: #0a6eff; }
.zoomer { margin-left: auto; display: flex; align-items: center; gap: 1px; }
.zb { width: 16px; height: 16px; }
.scroll { width: 94px; height: 16px; }

.seam { height: 2px; background: repeating-linear-gradient(90deg, #222 0 70px, #a8552c 70px 90px, #555 90px 130px, #7a3a20 130px 150px); }

/* taskbar */
.taskbar { height: 57px; display: flex; align-items: center; background: linear-gradient(90deg, #f6ddd0 0, #f2dfd6 210px, #dde2ec 350px, #e3e2e8 420px, #f0dfd6 520px, #f1e0d8 800px, #e9e2e4 900px, #f0e0d8 1100px, #f7dfcf 2048px); position: relative; }
.weather { width: 666px; flex: none; display: flex; align-items: center; position: relative; padding-left: 23px; }
.w-cloud { width: 29px; height: 19px; margin-top: 14px; }
.badge { position: absolute; left: 36px; top: -9px; width: 19px; height: 19px; border-radius: 50%; background: #c8281e; color: #fff; font-size: 12.5px; font-weight: 700; display: flex; align-items: center; justify-content: center; }
.w-text { display: flex; flex-direction: column; margin-left: 9px; font-family: "Liberation Sans", "Noto Sans CJK TC", sans-serif; font-size: 13.5px; color: #444; line-height: 19px; }
.w-sub { font-family: "Noto Sans CJK TC", sans-serif; font-size: 14px; color: #777; }
.start { width: 29px; height: 29px; flex: none; }
.search { width: 258px; height: 36px; margin-left: 16px; flex: none; border-radius: 18px; background: #fbf6f3; box-shadow: 0 1px 2px rgba(0, 0, 0, .25); display: flex; align-items: center; padding-left: 12px; font-family: "Noto Sans CJK TC", sans-serif; font-size: 14.5px; color: #777; position: relative; }
.s-icon { width: 18px; height: 18px; margin-right: 13px; }
.s-art { position: absolute; right: 0; top: 0; width: 58px; height: 36px; }
.apps { display: flex; margin-left: 4px; align-items: center; }
.app { width: 52.600px; height: 46px; display: flex; align-items: center; justify-content: center; position: relative; flex: none; }
.app svg { width: 28px; height: 28px; }
.app.current { background: #f8ebe6; border-radius: 5px; width: 46px; margin: 0 3.3px; box-shadow: 0 1px 1px rgba(0, 0, 0, .15); }
.chrome { width: 28px; height: 28px; border-radius: 50%; display: block; background: radial-gradient(circle, #3b82f0 0 5.5px, #fff 5.5px 7.5px, transparent 7.5px), conic-gradient(from 30deg, #ea4335 0 120deg, #fbbc05 120deg 240deg, #34a853 240deg 360deg); transform: rotate(-30deg); }
.dot { position: absolute; left: 50%; bottom: 0; width: 7px; height: 4px; margin-left: -3.5px; border-radius: 2px; background: #777; }
.bar { position: absolute; left: 50%; bottom: 0; width: 18px; height: 4px; margin-left: -9px; border-radius: 2px; background: #0a78d4; }
.tray { margin-left: auto; display: flex; align-items: center; padding-right: 24px; color: #222; }
.t-caret { width: 14px; height: 10px; }
.t-ime { margin-left: 21px; font-family: "Noto Sans CJK TC", sans-serif; font-size: 17px; }
.t-wifi { width: 20px; height: 18px; margin-left: 22px; }
.t-vol { width: 20px; height: 18px; margin-left: 9px; }
.t-bat { width: 20px; height: 13px; margin-left: 6px; }
.t-time { display: flex; flex-direction: column; align-items: flex-end; margin-left: 19px; font-size: 14px; line-height: 20px; }
```
FILE: charts.js
```js
const X = i => 104.5 + 19.92 * i;
const conv = (x0, sx, y0) => a => a.map(([x, y]) => [x0 + x / sx, y0 + y / 3]);
const pt = p => p.map(a => a[0].toFixed(1) + ',' + a[1].toFixed(1)).join(' ');
const poly = (p, c, w = 1, extra = '') => `<polyline points="${pt(p)}" fill="none" stroke="${c}" stroke-width="${w}" ${extra}/>`;
const rect = (x, y, w, h, f, extra = '') => `<rect x="${x.toFixed(1)}" y="${y.toFixed(1)}" width="${w.toFixed(1)}" height="${Math.max(h, 0).toFixed(1)}" fill="${f}" ${extra}/>`;
const line = (x1, y1, x2, y2, c, w = 1, extra = '') => `<line x1="${x1.toFixed(1)}" y1="${y1.toFixed(1)}" x2="${x2.toFixed(1)}" y2="${y2.toFixed(1)}" stroke="${c}" stroke-width="${w}" ${extra}/>`;
const label = (y, t) => `<text class="ax" x="39" y="${y + 4.5}">${t}</text>`;
const grid = ys => ys.map(y => line(95, y, 1895, y, '#444', 1, 'stroke-dasharray="3 2"')).join('');
const frame = (y0, y1) => line(95, y0, 95, y1, '#333') + line(1778, y0, 1778, y1, '#666', 1.5);
const mount = (id, y0, h, body) => {
  const s = document.getElementById(id);
  s.setAttribute('viewBox', `38 ${y0} 1857 ${h}`);
  s.setAttribute('preserveAspectRatio', 'none');
  s.innerHTML = body;
};
const interp = (p, x) => {
  if (x <= p[0][0]) return p[0][1];
  for (let k = 1; k < p.length; k++) if (x <= p[k][0]) {
    const t = (x - p[k - 1][0]) / (p[k][0] - p[k - 1][0]);
    return p[k - 1][1] + t * (p[k][1] - p[k - 1][1]);
  }
  return p[p.length - 1][1];
};

/* pane 1: candles with a volume profile */
const z1 = conv(0, 2.24, 0), z2 = conv(700, 2.24, 0), z3 = conv(1400, 2.42, 0);
const B = '#0000ff', C = '#00ffff', R = '#ff0000', Y = '#ffff00', O = '#c8c800';
const candles = [
  [0,815,835,0,0,B],[1,850,880,0,0,B],[2,865,880,0,0,O],[3,905,918,0,942,O],[4,925,957,0,972,C],[5,915,920,895,940,C],[6,905,938,895,0,C],[7,980,985,952,995,C],[8,1028,1047,0,1110,C],[9,1033,1130,1000,1152,C],[10,1000,1058,987,1080,C],[11,915,1068,905,1072,R],[12,915,945,0,990,C],[13,892,938,0,0,B],[14,870,885,860,910,B],[15,880,885,862,895,B],[16,918,940,895,950,B],[17,930,935,920,950,B],[18,938,955,930,968,B],[19,915,935,895,0,B],[20,867,877,838,0,B],[21,826,870,0,0,B],[22,806,815,798,825,B],[23,792,813,785,830,B],[24,803,806,800,822,B],[25,811,850,803,855,B],[26,785,845,0,0,B],[27,820,843,798,850,B],[28,825,836,818,860,B],[29,820,850,815,862,B],
  [30,800,815,792,830,B],[31,748,778,737,0,B],[32,738,741,720,752,B],[33,686,707,0,727,B],[34,648,688,642,692,B],[35,651,663,640,0,B],[36,670,672,0,0,B],[37,658,667,0,0,B],[38,632,678,0,0,B],[39,624,633,620,640,B],[40,635,638,605,645,B],[41,624,627,615,638,B],[42,643,648,628,650,B],[43,612,622,603,640,B],[44,616,622,0,0,B],[45,610,633,0,0,B],[46,612,640,0,0,B],[47,592,615,0,622,B],[48,557,576,548,585,B],[49,545,548,0,565,B],[50,540,549,512,562,B],[51,528,532,503,545,B],[52,543,556,538,590,B],[53,542,549,530,568,B],[54,527,544,522,555,B],[55,537,542,520,545,B],[56,549,557,528,557,Y],[57,511,540,0,546,R],[58,516,527,508,550,B],[59,497,525,0,532,B],[60,495,497,490,522,B],[61,502,515,492,533,B],[62,466,500,0,515,B],[63,444,462,438,470,B],[64,447,455,445,465,B],[65,447,460,0,0,B],
  [66,378,436,370,440,B],[67,367,388,338,408,B],[68,348,395,326,400,B],[69,366,374,0,390,B],[70,377,380,362,398,B],[71,366,395,345,400,B],[72,372,383,370,392,B],[73,343,365,343,382,B],[74,346,352,325,355,B],[75,327,332,320,345,B],[76,336,341,325,355,B],[77,311,333,305,338,B],[78,298,311,295,318,B],[79,270,272,252,285,B],[80,280,303,250,310,B]
];
const upper = [...z1([[1120,935],[1330,880],[1568,847]]), ...z2([[150,800],[240,767],[300,750],[400,717],[450,703],[520,685],[640,660],[790,633],[945,596],[1080,578],[1210,560],[1430,520],[1568,503]]), ...z3([[130,462],[240,436],[420,405],[480,390],[620,365],[680,348],[722,343]])];
const lower = [...z1([[1120,935],[1300,925],[1568,898]]), ...z2([[100,878],[230,850],[430,800],[680,730],[850,685],[1000,650],[1150,620],[1300,595],[1568,555]]), ...z3([[80,538],[200,518],[350,490],[500,458],[722,410]])];
const cyanTop = z1([[220,865],[430,895],[560,905],[720,910],[900,920],[1120,935]]);
const cyanBot = z1([[220,865],[430,900],[560,915],[680,945],[900,938],[1120,935]]);
const vols = [[268,283,451],[292,303,283],[303,313,318],[313,326,358],[335,347,783.5],[347,358,928.6],[370,383,1295.5],[383,394,677.7],[395,406,382],[446,458,215.6],[460,472,662.5],[486,500,448],[501,514,225],[515,528,392],[530,544,1000],[544,560,1090],[593,609,240.6],[611,628,646],[629,643,686.6],[645,663,625],[665,680,470.5],[700,720,293.7],[740,762,545.5],[785,805,281],[805,830,1653],[830,851,705],[878,902,1407],[902,930,1537],[930,957,874.5],[957,985,394],[1015,1047,484],[1047,1080,786.6]];
const target = (cx, cy, ry1, ry2, small) => {
  let s = `<g fill="none" stroke="#ddd" stroke-width="1">`;
  s += `<ellipse cx="${cx}" cy="${cy}" rx="51.3" ry="${ry1}"/><ellipse cx="${cx}" cy="${cy}" rx="27.5" ry="${ry2}"/>`;
  if (small) s += `<ellipse cx="${cx}" cy="${cy}" rx="${small[0]}" ry="${small[1]}"/>`;
  s += `<path d="M${cx - 51.3} ${cy}h102.6M${cx} ${cy - ry1}v${ry1 * 2}"/></g>`;
  return s;
};
let p1 = `<defs><clipPath id="c1"><rect x="95" y="83" width="1800" height="302"/></clipPath></defs>`;
p1 += grid([158.5, 234, 309.3]) + frame(83, 384);
p1 += `<polygon points="${pt(cyanTop)} ${pt([...cyanBot].reverse())}" fill="#8fe4ff"/>` + poly(cyanTop, '#c8b000') + poly(cyanBot, '#bbb', 1.2);
p1 += `<polygon points="${pt(upper)} ${pt([...lower].reverse())}" fill="#c00000"/>` + poly(upper, '#c8c8c8', 1.2) + poly(lower, '#d8a800', 1.2);
candles.forEach(([i, t, b, wt, wb, c]) => {
  const x = X(i), wT = (wt || t) / 3, wB = (wb || b) / 3;
  p1 += line(x, wT, x, wB, c) + rect(x - 8, t / 3, 16, Math.max((b - t) / 3, 1.5), c);
});
vols.forEach(([t, b, r]) => { p1 += rect(95, t / 3, r - 95, (b - t) / 3, 'rgba(72,72,195,.4)', 'stroke="#0b8a9a" stroke-width="1"'); });
p1 += `<g clip-path="url(#c1)">` + target(821.9, 224.3, 32, 16) + target(1001.3, 207.3, 35.5, 20, [18, 3.5]) + target(1698.3, 96.7, 36.6, 21.6, [19.6, 4.7]) + `</g>`;
p1 += `<text class="big" x="1653" y="276.5">48.929</text><text class="big" x="1407" y="300.5">43.902</text><text class="big" x="1537" y="310.5">42.227</text>`;
[[92, '113.439'], [159, '81.118'], [234.5, '58.005'], [310, '41.478'], [376, '29.660']].forEach(([y, t]) => { p1 += label(y, t); });
mount('p1', 83, 301, p1);

/* pane 2: chip fan */
const zA = conv(0, 2.24, 380), zB = conv(700, 2.24, 400), zC = conv(1400, 2.42, 400);
const G = '#00e000';
const p2c = [[473,487,R],[466,472,R],[466,468,G],[468,483,G],[478,492,G],[478,490,G],[485,495,G],[495,512,G],[505,520,G],[520,538,G],[535,548,G],[545,548,R],[533,545,R],[515,533,R],[505,518,R],[490,505,G],[487,492,R],[487,498,G],[490,498,G],[495,506,G],[497,506,R],[488,497,R],[473,490,R],[460,475,R],[451,462,R],[450,454,R],[452,458,G],[453,460,G],[457,462,G],[458,465,G],[458,465,R]].map(([t, b, c]) => [380 + t / 3, 380 + b / 3, c]);
const p2d = [[392,400,R],[378,390,R],[358,376,R],[340,360,R],[322,340,R],[316,322,R],[313,317,R],[310,312,R],[307,312,R],[301,307,R],[296,302,R],[295,298,R],[292,296,'#a00000'],[290,293,'#a00000'],[290,292,'#a00000'],[290,292,'#a00000'],[286,291,R],[276,285,R],[262,275,R],[250,263,R],[235,248,R],[233,236,R],[232,236,'#00a000'],[235,238,'#00a000'],[235,238,'#00a000'],[235,238,'#00a000'],[234,238,R],[232,235,R],[224,232,R],[217,225,R],[212,218,R],[208,214,R],[196,207,R],[183,194,R],[173,183,R],[157,175,R],[137,160,R],[115,135,R],[100,117,R],[96,103,R],[96,100,G],[98,103,G],[100,106,R],[91,100,R],[80,92,R],[70,78,R],[63,72,R],[54,64,R],[33,52,R],[24,36,R]].map(([t, b, c]) => [400 + t / 3, 400 + b / 3, c]);
const p2all = [...p2c, ...p2d];
const mag = [[103,541],[130,540.5],[200,543],[300,552],[341,547.7],[402,545],[491,545.7],[560,544],[700,540],[789,531.7],[923,521.7],[1057,515],[1191,505],[1325,495.7],[1400,488.3],[1500,474],[1600,464],[1699.6,452]];
let p2 = grid([446.7, 485, 523]) + frame(408, 562);
p2 += poly(mag, '#ff00ff', 4);
for (let n = 1; n <= 5; n++) {
  const f = n / 6, pts = [];
  p2all.forEach(([t, b], i) => { const x = X(i), m = interp(mag, x); if (i >= 3) pts.push([x, b + (m - b) * f]); });
  p2 += poly(pts, '#c000c0', 1.1, 'stroke-dasharray="3 2"');
}
p2all.forEach(([t, b, c], i) => { p2 += rect(X(i) - 8, t, 16, b - t, c); });
p2 += poly(mag.slice(0, 2), '#ff00ff', 4) + poly(mag.slice(4), '#ff00ff', 4);
[[416.7, '106.677'], [447, '88.699'], [486, '70.720'], [524, '52.741'], [555, '34.763']].forEach(([y, t]) => { p2 += label(y, t); });
mount('p2', 408, 154, p2);

/* pane 3: stacked chips */
const yT = [708,771,790,855,873,840,828,975,1133,1078,1135,826,873,805,771,771,867,852,912,820,750,695,682,684,679,684,708,682,691,682,679,650,647,641];
const rT0 = [927,1003,1035,1120,1142,1125,1120,1258,1293,1300,1305,1125,1180,1085,1072,1075,1198,1197,1238,1170,1082,940,885,924,895,918,1040,963,988,978,915];
const rT1 = [746,717,662,609,638,652,650,623,630,638,640,652,645,655,657,660,650,602,597,604,597,615,632,620,623,638,627,636,636,643,648,609,612,597,621,578,595,607,617,627,645,636,643,652,660,667,648,617,597,648];
const Yz = z => 380 + z / 3;
let p3 = grid([643, 701, 757.7]) + frame(587, 815);
for (let i = 0; i <= 80; i++) {
  const x = X(i) - 8.2, w = 16.4;
  const yy = i < yT.length ? Yz(yT[i]) : 586.5;
  const ry = i <= 30 ? Yz(rT0[i]) : 400 + rT1[i - 31] / 3;
  if (i < yT.length) p3 += rect(x, 586.5, w, yy - 586.5, '#00e400');
  p3 += rect(x, yy, w, ry - yy, '#ffff00') + rect(x, ry, w, 815 - ry, '#ff0000');
}
p3 += line(104.5, 701, 1699, 701, 'rgba(0,0,0,.55)', 1);
const mA = zA([[233,1072],[350,1072],[500,1052],[680,1057],[760,1045],[900,1038],[1010,1025],[1125,985],[1250,1000],[1380,1022],[1568,1042]]);
const mB = zB([[100,1000],[240,1050],[440,1150],[500,1162],[600,1160],[650,1157],[800,1157],[1000,1175],[1200,1186],[1380,1170],[1568,1180]]);
const mC = zC([[200,1192],[350,1188],[550,1162],[722,1162]]);
const tA = zA([[233,1083],[330,1120],[500,1130],[560,1100],[680,997],[780,985],[900,1005],[950,1000],[1010,1020],[1120,1100],[1250,1140],[1350,1160],[1500,1225],[1568,1240]]);
const tB = zB([[200,1197],[300,1215],[450,1237],[585,1244]]);
const uA = zA([[233,1072],[350,1033],[480,1040],[560,1070],[680,1172],[780,1197],[900,1180],[950,1192],[1050,1175],[1180,1125],[1250,1085],[1400,1025],[1568,948]]);
const uB = zB([[100,858],[200,810],[300,745],[450,655],[550,638],[650,645],[900,632],[1100,622],[1200,615],[1300,620],[1400,632],[1568,627]]);
const uC = zC([[150,610],[320,612],[450,625],[550,637],[620,642],[722,640]]);
p3 += poly([...tA, ...tB], '#18c0c8', 1.2) + poly([...mA, ...mB, ...mC], '#f000c0', 1.2) + poly([...uA, ...uB, ...uC], '#8a1a90', 1.2);
[[595, '100.000'], [645, '75.000'], [701, '50.000'], [758, '25.000'], [807, '0.000']].forEach(([y, t]) => { p3 += label(y, t); });
mount('p3', 587, 228, p3);

/* pane 4: MACD */
const z5 = conv(0, 2.24, 820), z10 = conv(700, 2.24, 820), z11 = conv(1400, 3, 835);
const base = 918.7;
const h0 = [240,245,252,267,277,280,282,303,325,333,342,312,298,277,262,255,264,267,276,273,265,246,233,228,228,232,246,250,262,265,267,255,250,236,216,210,216,222,222,225,237,247,262,266,276,291,293,291,279,273,270,267,273,283,286,293,306,303,310,303,299,309,294,285,279,280].map(z => 820 + z / 3);
const h1 = [205,195,174,180,195,220,225,222,224,226,234,229,224,210,226].map(z => 835 + z / 3);
let p4 = grid([878.7, base, 958.3]) + frame(840, 998);
[...h0, ...h1].forEach((y, i) => { p4 += y <= base ? rect(X(i) - .8, y, 1.6, base - y, '#00c000') : rect(X(i) - .6, base, 1.2, y - base, '#d00000'); });
const redM = [...z5([[233,326],[320,322],[400,328],[510,330],[590,352],[680,368],[770,348],[890,320],[1040,318],[1120,308],[1210,275],[1300,257],[1420,250],[1568,245]]), ...z10([[90,225],[180,192],[230,178],[300,168],[400,150],[640,152],[680,160],[760,160],[860,143],[940,135],[1040,140],[1150,147],[1260,152],[1390,153],[1520,138],[1568,137]]), ...z11([[60,70],[120,57],[180,38],[240,33],[300,34],[360,43],[420,41],[480,35],[540,33],[600,32],[660,33],[720,30],[775,22],[835,13],[895,17]])];
const yelM = [...z5([[233,355],[300,343],[400,338],[540,333],[680,348],[770,350],[900,340],[1100,325],[1170,316],[1300,290],[1400,275],[1568,260]]), ...z10([[90,248],[180,233],[270,212],[400,183],[500,170],[600,160],[760,160],[900,150],[1000,145],[1200,148],[1400,150],[1568,145]]), ...z11([[60,93],[120,87],[180,77],[240,67],[300,60],[360,58],[420,52],[480,49],[540,47],[600,43],[660,40],[720,37],[775,35],[835,30],[895,30]])];
p4 += poly(redM, '#c00000', 1.5) + poly(yelM, '#b4b400', 1.5);
[[848, '8.465'], [880, '4.232'], [919, '0.000'], [959.5, '-4.232'], [991, '-8.465']].forEach(([y, t]) => { p4 += label(y, t); });
mount('p4', 840, 158, p4);

/* pane 5: RSI */
const rsiTail = (a) => a.map(z => 835 + z / 3);
const head = a => a.map(z => 820 + z / 3);
const rR = [...head([790,863,877,917,923,908,895,980,1033,1005,1022,840,873,818,811,811,885,878,900,855,803,745,729,743,739,745,835,785,800,785,760,687,682,650,607,648,672,660,634,629,672,661,730,685,725,762,722,691,647,643,641,617,680,714,680,720,768,705,760,707,707,775,695,690,670,712]), ...rsiTail([582,617,580,655,672,722,685,652,657,643,655,620,603,574,703])];
const rY = [...head([833,875,880,910,912,905,895,950,987,970,982,867,885,848,845,845,885,882,893,865,835,792,782,789,785,788,835,807,818,808,793,742,737,708,670,697,710,702,680,677,700,691,730,703,722,749,727,708,676,672,670,653,690,712,689,715,746,700,741,709,709,753,700,696,685,715]), ...rsiTail([603,624,598,653,665,698,678,655,657,650,655,632,620,600,680])];
const rW = [...head([850,873,878,895,895,892,888,915,943,937,943,875,888,865,861,861,887,885,892,872,850,828,823,824,824,824,847,832,837,833,826,793,790,770,742,753,760,757,740,738,748,745,763,745,756,767,752,743,720,718,717,706,725,734,722,733,752,724,747,728,728,752,718,717,708,728]), ...rsiTail([634,648,629,662,670,693,678,663,664,660,660,648,641,627,682])];
const ser = a => a.map((y, i) => [X(i), y]);
let p5 = `<defs><clipPath id="c5"><rect x="95" y="1022" width="1800" height="143"/></clipPath></defs>`;
p5 += grid([1057.7, 1094, 1129]) + frame(1022, 1165) + line(95, 1097, 1895, 1097, '#777');
p5 += `<g clip-path="url(#c5)">` + poly(ser(rR), '#c00000', 1.2) + poly(ser(rW), '#c8c8c8', 1.2) + poly(ser(rY), '#c8c800', 1.2) + `</g>`;
p5 += rect(38, 1089, 57, 16, '#fff');
[[1031, '84.692'], [1058, '70.532'], [1130, '42.211'], [1157, '28.051']].forEach(([y, t]) => { p5 += label(y, t); });
p5 += `<text class="ax ax-dark" x="39" y="1101.5">55.098</text>`;
mount('p5', 1022, 143, p5);

/* histogram in the side panel */
const lefts = [1447,1447,1447,1447,1418,1418,1418,1392,1418,1418,1392,1418,1392,1338,1338,1338,1310,1365,1310,1281,1254,1281,1310,1365,1447,1447,1447,1447,1418,1392,1392,1365,1392,1418,1447,1365,1365,1310,1254,1227,1200,1227,1310,1365,1447,1447,1447];
const hs = document.getElementById('hist');
hs.setAttribute('viewBox', '1896 83 113 166');
hs.innerHTML = lefts.map((z, k) => {
  const x = 1400 + z / 2.42, y = 83.5 + k * 3.53;
  return rect(x, y, 2009 - x, 3.53, 'none', 'stroke="#ffff00" stroke-width="1"');
}).join('');

/* time axis */
const ta = document.getElementById('timeaxis');
ta.setAttribute('viewBox', '38 1165 2010 25');
let t = '';
[[104, '3'], [204, '4'], [622, '5'], [1041, '6'], [1439, '7']].forEach(([x, s]) => {
  t += line(x, 1165, x, 1170, '#555') + `<text class="tick" x="${x}" y="1180" text-anchor="middle">${s}</text>`;
});
t += rect(1675, 1169, 83, 15, '#404040') + `<text class="chip" x="1676" y="1180.5">2025-07-21.週一</text>`;
ta.innerHTML = t;
```
